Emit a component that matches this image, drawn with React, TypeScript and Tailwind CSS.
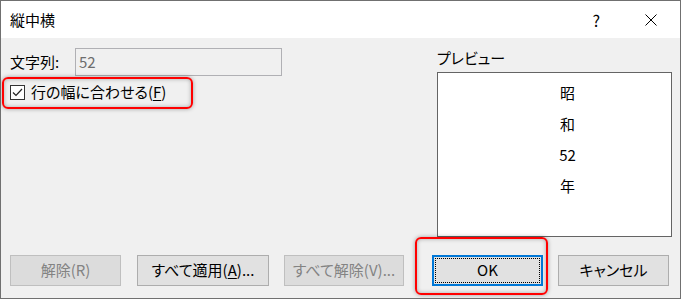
import React from "react";

const font = "font-['Noto_Sans_CJK_JP','Noto_Sans',sans-serif] [font-feature-settings:'palt']";

function Btn({ children, w, disabled, primary }: { children: React.ReactNode; w: string; disabled?: boolean; primary?: boolean }) {
  if (primary) {
    return (
      <div className={`${w} h-[31px] border-2 border-[#0078d7] bg-[#e1e1e1] p-[1px]`}>
        <div className="w-full h-full border border-dotted border-black flex items-center justify-center text-[15px] text-black">
          {children}
        </div>
      </div>
    );
  }
  return (
    <div
      className={`${w} h-[31px] border flex items-center justify-center text-[15px] ${
        disabled ? "border-[#bfbfbf] bg-[#dcdcdc] text-[#838383]" : "border-[#adadad] bg-[#e1e1e1] text-black"
      }`}
    >
      {children}
    </div>
  );
}

export default function App() {
  return (
    <div className={`relative w-[681px] h-[299px] border border-[#707070] bg-[#f0f0f0] flex flex-col ${font} text-black`}>
      {/* title bar */}
      <div className="h-[37px] bg-white flex items-center shrink-0">
        <span className="ml-[9px] text-[15px] leading-none">縦中横</span>
        <span className="ml-auto text-[16px] leading-none mr-[45px]">?</span>
        <svg width="12" height="12" viewBox="0 0 12 12" className="mr-[23px]">
          <path d="M0.5 0.5 L11.5 11.5 M11.5 0.5 L0.5 11.5" stroke="#000" strokeWidth="1" />
        </svg>
      </div>

      {/* body */}
      <div className="flex-1 flex flex-col">
        <div className="flex pt-[10px]">
          <div className="flex flex-col pl-[9px] w-[435px]">
            <div className="flex items-center h-[28px]">
              <span className="w-[65px] text-[15px]">文字列:</span>
              <div className="w-[207px] h-[28px] border border-[#b0b0b4] bg-[#f0f0f0] flex items-center pl-[3px] text-[15px] text-[#6d6d6d]">
                52
              </div>
            </div>
            <div className="flex items-center h-[31px] mt-[1px]">
              <div className="w-[15px] h-[15px] border border-[#333] bg-white flex items-center justify-center">
                <svg width="13" height="13" viewBox="0 0 13 13">
                  <path d="M2 6.5 L5 9.5 L11 3" fill="none" stroke="#222" strokeWidth="1.2" />
                </svg>
              </div>
              <span className="ml-[6px] text-[15px]">
                行の幅に合わせる(<span className="underline underline-offset-2">F</span>)
              </span>
            </div>
          </div>
          <div className="flex flex-col w-[235px] ml-[1px]">
            <div className="h-[20px] flex items-center text-[15px]">プレビュー</div>
            <div className="mt-[4px] h-[165px] border border-[#646464] bg-white flex flex-col items-center pt-[5px] pl-[26px] text-[15px]">
              <div className="h-[31px] flex items-center">昭</div>
              <div className="h-[31px] flex items-center">和</div>
              <div className="h-[31px] flex items-center">52</div>
              <div className="h-[31px] flex items-center">年</div>
            </div>
          </div>
        </div>

        <div className="mt-auto flex items-center pl-[9px] pb-[12px]">
          <Btn w="w-[111px]" disabled>解除(R)</Btn>
          <div className="ml-[16px]">
            <Btn w="w-[132px]">
              すべて適用(<span className="underline underline-offset-2">A</span>)...
            </Btn>
          </div>
          <div className="ml-[15px]">
            <Btn w="w-[120px]" disabled>すべて解除(V)...</Btn>
          </div>
          <div className="ml-[28px]">
            <Btn w="w-[111px]" primary>OK</Btn>
          </div>
          <div className="ml-[15px]">
            <Btn w="w-[111px]">キャンセル</Btn>
          </div>
        </div>
      </div>

      {/* red highlight annotations */}
      <div className="absolute left-[1px] top-[76px] w-[191px] h-[32px] border-2 border-[#ff0000] rounded-[6px] shadow-[0_0_4px_rgba(0,0,0,0.35),inset_0_0_4px_rgba(0,0,0,0.3)]" />
      <div className="absolute left-[414px] top-[236px] w-[133px] h-[58px] border-2 border-[#ff0000] rounded-[6px] shadow-[0_0_4px_rgba(0,0,0,0.35),inset_0_0_4px_rgba(0,0,0,0.3)]" />
    </div>
  );
}
